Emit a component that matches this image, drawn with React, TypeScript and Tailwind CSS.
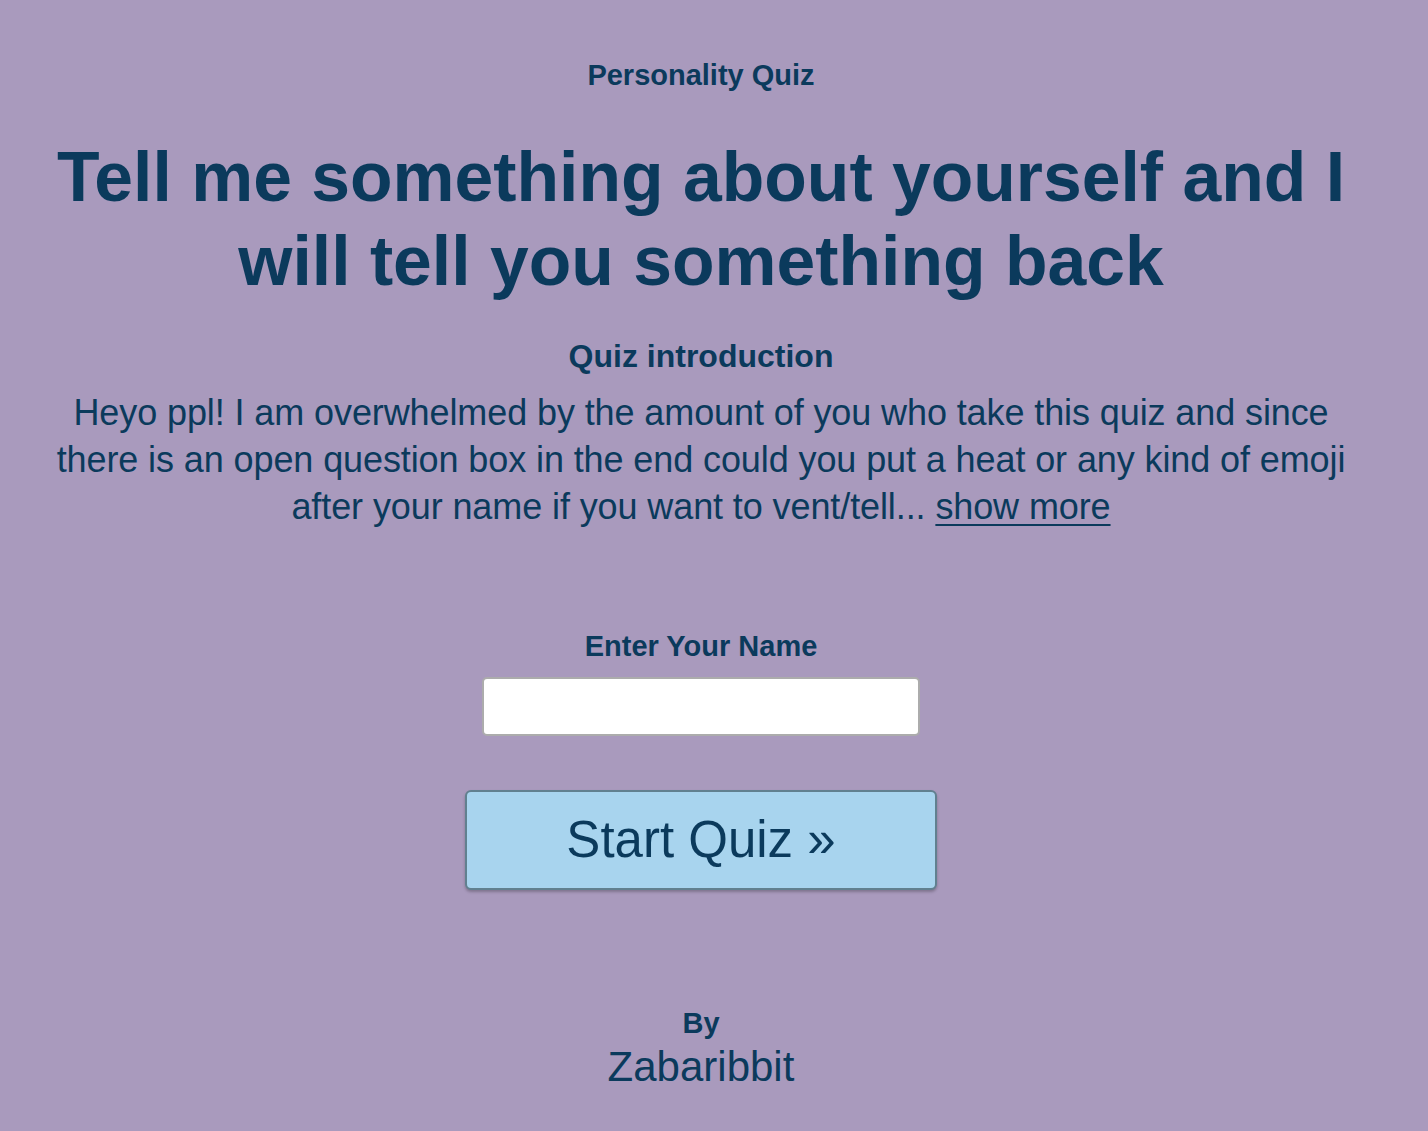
import React from "react";

export default function App() {
  return (
    <div className="min-h-screen bg-[#a99abd] text-[#0b3a5c] font-['Liberation_Sans',Arial,sans-serif]">
      <div className="flex justify-center pr-[26px]">
        <div className="w-[1300px] flex flex-col items-center text-center pt-[59px] pb-10">
          <div className="text-[29px] leading-[32px] font-bold">Personality Quiz</div>

          <h1 className="mt-[44px] text-[69.7px] leading-[84px] font-bold">
            Tell me something about yourself and I will tell you something back
          </h1>

          <h2 className="mt-[35px] text-[32px] leading-[36px] font-bold">Quiz introduction</h2>
          <p className="mt-[15px] text-[36px] leading-[47px] tracking-[-0.1px]">
            Heyo ppl! I am overwhelmed by the amount of you who take this quiz and since there is
            an open question box in the end could you put a heat or any kind of emoji after your
            name if you want to vent/tell...{" "}
            <a href="#" className="underline underline-offset-[5px] decoration-2">
              show more
            </a>
          </p>

          <label htmlFor="name" className="mt-[100px] text-[29px] leading-[32px] font-bold">
            Enter Your Name
          </label>
          <input
            id="name"
            type="text"
            className="mt-[15px] w-[438px] h-[59px] bg-white border-2 border-[#acacac] rounded-[5px] px-3 text-[24px] outline-none"
          />

          <button className="mt-[54px] w-[472px] h-[100px] bg-[#a8d4ee] border-2 border-[#61808f] rounded-[6px] shadow-[0_2px_3px_rgba(0,0,0,0.25)] text-[51px] leading-[56px] text-[#0b3a5c]">
            Start Quiz »
          </button>

          <div className="mt-[117px] text-[29px] leading-[32px] font-bold">By</div>
          <div className="mt-[5px] text-[42px] leading-[46px]">Zabaribbit</div>
        </div>
      </div>
    </div>
  );
}
